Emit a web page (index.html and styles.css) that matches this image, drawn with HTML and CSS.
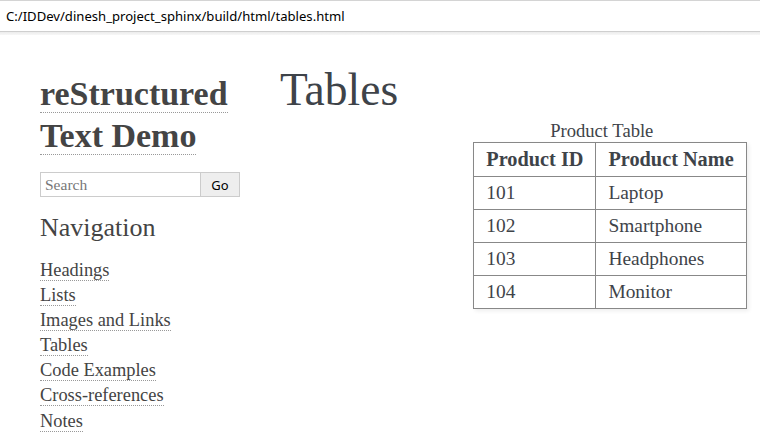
FILE: index.html
```html
<!DOCTYPE html>
<html lang="en">
<head>
<meta charset="utf-8">
<title>Tables — reStructured Text Demo</title>
<link rel="stylesheet" href="styles.css">
</head>
<body>
<div class="addressbar">C:/IDDev/dinesh_project_sphinx/build/html/tables.html</div>
<div class="addrshadow"></div>
<div class="page">
  <aside class="sidebar">
    <h1 class="logo"><a href="#">reStructured Text Demo</a></h1>
    <form class="search">
      <input class="search-input" type="text" placeholder="Search">
      <button class="search-go" type="button">Go</button>
    </form>
    <h3 class="nav-title">Navigation</h3>
    <ul class="nav">
      <li><a href="#">Headings</a></li>
      <li><a href="#">Lists</a></li>
      <li><a href="#">Images and Links</a></li>
      <li><a href="#">Tables</a></li>
      <li><a href="#">Code Examples</a></li>
      <li><a href="#">Cross-references</a></li>
      <li><a href="#">Notes</a></li>
    </ul>
  </aside>
  <main class="main">
    <h1 class="page-title">Tables<a class="headerlink" href="#">¶</a></h1>
    <table class="docutils">
      <caption><span class="caption-text">Product Table</span><a class="headerlink" href="#">¶</a></caption>
      <thead>
        <tr><th>Product ID</th><th>Product Name</th></tr>
      </thead>
      <tbody>
        <tr><td>101</td><td>Laptop</td></tr>
        <tr><td>102</td><td>Smartphone</td></tr>
        <tr><td>103</td><td>Headphones</td></tr>
        <tr><td>104</td><td>Monitor</td></tr>
      </tbody>
    </table>
  </main>
</div>
</body>
</html>
```

FILE: styles.css
```css
html, body {
  margin: 0;
  padding: 0;
  overflow: hidden;
  background: #fff;
}

body {
  font-family: "Liberation Serif", "DejaVu Serif", serif;
  color: #3e4349;
}

.addressbar {
  height: 30px;
  border-top: 1px solid #d4d4d4;
  border-bottom: 1px solid #cfcfcf;
  padding-left: 6px;
  font-family: "Noto Sans", "Liberation Sans", sans-serif;
  font-size: 13.1px;
  line-height: 30px;
  color: #000;
  box-sizing: content-box;
}

.addrshadow {
  height: 3px;
  background: linear-gradient(#ececec, #f7f7f7);
}

.page {
  display: flex;
  padding-left: 40px;
  overflow: hidden;
}

.sidebar {
  width: 200px;
  flex: none;
  margin-right: 40px;
  padding-top: 38px;
}

.logo {
  margin: 0;
  font-size: 34px;
  line-height: 42px;
  font-weight: bold;
}

.logo a {
  color: #444;
  text-decoration: none;
  border-bottom: 1px dotted #999;
}

.search {
  display: flex;
  margin: 15px 0 0;
  height: 25px;
}

.search-input {
  width: 160px;
  box-sizing: border-box;
  border: 1px solid #ccc;
  border-right: none;
  margin: 0;
  padding: 0 4px;
  font-family: "Liberation Serif", serif;
  font-size: 15.5px;
  color: #3e4349;
  outline: none;
}

.search-input::placeholder {
  color: #777;
}

.search-go {
  width: 40px;
  box-sizing: border-box;
  border: 1px solid #ccc;
  background: #eee;
  margin: 0;
  padding: 0;
  font-family: "Noto Sans", "Liberation Sans", sans-serif;
  font-size: 13px;
  color: #000;
}

.nav-title {
  margin: 15px 0 0;
  font-size: 26px;
  line-height: 31px;
  font-weight: normal;
  color: #444;
}

.nav {
  list-style: none;
  margin: 15px 0 0;
  padding: 0;
  font-size: 18.4px;
  line-height: 25.1px;
}

.nav a {
  color: #444;
  text-decoration: none;
  border-bottom: 1px dotted #999;
}

.main {
  width: 660px;
  flex: none;
  padding-top: 28px;
}

.page-title {
  margin: 0;
  font-size: 45.5px;
  line-height: 53px;
  font-weight: normal;
  color: #3e4349;
}

.headerlink {
  visibility: hidden;
  padding: 0 4px;
  text-decoration: none;
  color: #ddd;
}

.docutils {
  margin: 4px auto 0;
  border-collapse: collapse;
  border: 1px solid #888;
  box-shadow: 2px 2px 4px #eee;
  font-size: 19.4px;
}

.docutils caption {
  font-size: 18.6px;
  line-height: 22px;
  color: #3e4349;
}

.docutils th,
.docutils td {
  border: 1px solid #888;
  padding: 5px 12px;
  line-height: 22px;
  text-align: left;
  color: #3e4349;
}

.docutils th {
  font-size: 20.3px;
  font-weight: bold;
  padding-top: 5px;
  padding-bottom: 6px;
}
```
